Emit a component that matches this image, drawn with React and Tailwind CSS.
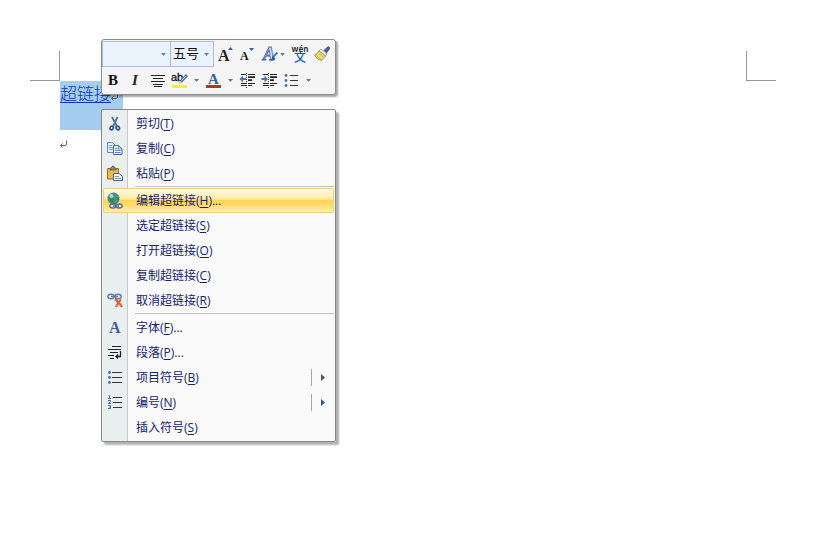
import React from "react";

const SERIF = "Liberation Serif, serif";

function Caret() {
  return (
    <svg width="5" height="3" viewBox="0 0 5 3" aria-hidden="true">
      <path d="M0 0h5L2.5 3z" fill="#5f7fae" />
    </svg>
  );
}

function CornerMark({ side }) {
  const edge = side === "left" ? "border-r" : "border-l";
  return <div className={`h-[30px] w-[30px] border-b border-[#999] ${edge}`} />;
}

function ReturnMark() {
  return (
    <svg width="9" height="9" viewBox="0 0 9 9" fill="none" stroke="#666" aria-hidden="true">
      <path d="M6.5 0.5v3.5q0 1.5-1.5 1.5H0.500M2.500 3.5l-2 2 2 2" />
    </svg>
  );
}

function Icon({ children, size = 18 }) {
  return (
    <svg width={size} height={size} viewBox={`0 0 ${size} ${size}`} fill="none" aria-hidden="true" className="overflow-visible">
      {children}
    </svg>
  );
}

const GrowIcon = () => (
  <Icon>
    <text x="2" y="16" fontFamily={SERIF} fontWeight="bold" fontSize="16" fill="#222">A</text>
    <path d="M12 5l2.500-3L17 5z" fill="#355a9c" />
  </Icon>
);
const ShrinkIcon = () => (
  <Icon>
    <text x="2" y="15" fontFamily={SERIF} fontWeight="bold" fontSize="12" fill="#222">A</text>
    <path d="M11 3h5l-2.500 3z" fill="#355a9c" />
  </Icon>
);
const StyleIcon = () => (
  <Icon>
    <text x="3" y="15" fontFamily={SERIF} fontStyle="italic" fontWeight="bold" fontSize="18" fill="#e9f0fa" stroke="#3c66a8" strokeWidth="0.9">A</text>
    <path d="M17.500 7.500L13 12" stroke="#5278b5" strokeWidth="2" />
    <path d="M12.500 11l3 2.500-5.500 3q2-2 2.500-5.500z" fill="#34578f" />
  </Icon>
);
const PinyinIcon = () => (
  <span className="flex flex-col items-center" aria-hidden="true">
    <span className="h-[7px] font-['Open_Sans',sans-serif] text-[8px] leading-[6px] font-bold text-[#333]">wén</span>
    <span className="h-[10px] text-[12px] leading-[10px] font-medium text-[#2458bd]">文</span>
  </span>
);
const BrushIcon = () => (
  <Icon>
    <path d="M11 5.500l4-4 2 1.500-3.500 5z" fill="#4d6294" stroke="#2f426f" strokeWidth="0.7" />
    <path d="M8 4l6 5-1.500 2L6 6z" fill="#eef1f5" stroke="#77808f" strokeWidth="0.7" />
    <path d="M6 6l6.500 5-4 4.500Q4 15 1.500 10 4.500 9 6 6z" fill="#f5e27c" stroke="#8d7430" strokeWidth="0.7" />
    <path d="M3.500 10.500l5 4M6 8.500l4 3.500" stroke="#b99a40" strokeWidth="0.8" />
  </Icon>
);
const AlignIcon = () => (
  <Icon>
    <path d="M3 4.500h14M5 7.500h10M3 10.500h14M5 13.500h10M6 15.500h8" stroke="#222" />
  </Icon>
);
const HighlightIcon = () => (
  <Icon>
    <text x="1" y="10" fontFamily="Liberation Sans, sans-serif" fontSize="11" fill="#111" stroke="#111" strokeWidth="0.3">ab</text>
    <path d="M2 14h15v3H2z" fill="#f5f02a" />
    <path d="M17 4l-6.500 7" stroke="#4b6fae" strokeWidth="3" />
    <path d="M16 5l-4.500 4.500" stroke="#cfdcf0" />
    <path d="M9.500 9.500l3 2.500L8 13z" fill="#d5dc50" />
  </Icon>
);
const FontColorIcon = () => (
  <Icon>
    <text x="4" y="13" fontFamily={SERIF} fontWeight="bold" fontSize="15" fill="#3e639b">A</text>
    <path d="M2 14h15v3H2z" fill="#954719" />
  </Icon>
);
const IndentLines = () => (
  <>
    <path d="M3 3.500h5M10 3.500h7M10 6.500h7M10 9.500h4M3 12.500h5M10 12.500h7M3 14.500h5M10 14.500h4" stroke="#222" />
    <path d="M10 5.500h7M10 8.500h4" stroke="#555" />
    <path d="M8.500 2v15" stroke="#333" strokeDasharray="1 1" />
  </>
);
const OutdentIcon = () => (
  <Icon>
    <IndentLines />
    <path d="M5 4.500L1.500 8 5 11.500V9h3V7H5z" fill="#4a70bb" />
  </Icon>
);
const IndentIcon = () => (
  <Icon>
    <IndentLines />
    <path d="M4.500 4.500L8 8l-3.500 3.500V9h-3V7h3z" fill="#4a70bb" />
  </Icon>
);
const BulletsIcon = () => (
  <Icon>
    <path d="M8 4.500h8M8 9.500h8M8 14.500h8" stroke="#333" />
    <g fill="#4770aa">
      <circle cx="4" cy="4.500" r="1.400" />
      <circle cx="4" cy="9.500" r="1.400" />
      <circle cx="4" cy="14.500" r="1.400" />
    </g>
  </Icon>
);

const CutIcon = () => (
  <Icon>
    <path d="M6 2l5 9.500M11.500 2L7 11.500" stroke="#54729f" strokeWidth="1.800" />
    <ellipse cx="5.700" cy="13" rx="1.600" ry="2" stroke="#2d5294" strokeWidth="1.600" transform="rotate(25 5.700 13)" />
    <ellipse cx="11.800" cy="13" rx="1.600" ry="2" stroke="#2d5294" strokeWidth="1.600" transform="rotate(-25 11.800 13)" />
  </Icon>
);
const CopyIcon = () => (
  <Icon>
    <path d="M1.500 2.500h5l3 3v7h-8z" fill="#e6f0fc" stroke="#6286bf" />
    <path d="M3 5.500h3M3 7.500h4M3 9.500h4" stroke="#82a4d5" />
    <path d="M7.500 5.500h5l3.500 3.500v5.500H7.500z" fill="#f5f9ff" stroke="#4269aa" />
    <path d="M12.500 5.500V9H16M9 8.500h2.500M9 10.500h5.500M9 12.500h5.500" stroke="#5e86c4" />
  </Icon>
);
const PasteIcon = () => (
  <Icon>
    <path d="M1.500 3.500h11v10.500h-11z" fill="#efb94a" stroke="#9b6d20" />
    <path d="M4 5V3h1.500q0-2 1.500-2t1.500 2H10v2z" fill="#8e8a80" stroke="#5b5040" strokeWidth="0.8" />
    <path d="M7.500 8.500h5.500l3.500 3v4h-9z" fill="#f2f5fa" stroke="#4f627e" />
    <path d="M9 11.500h4M9 13.500h6" stroke="#7d94b5" />
  </Icon>
);
const GlobeLinkIcon = () => (
  <Icon>
    <circle cx="7.500" cy="6.500" r="5.500" fill="#459a8e" stroke="#3c7780" />
    <path d="M3 5q3-4 6-2L7 6l2 2-2 4q-3-2-4-7zM10 5l2.500 1v3l-2-1z" fill="#37865d" />
    <circle cx="5.500" cy="4" r="2" fill="#a5dce0" />
    <g stroke="#5a6d85" strokeWidth="1.400" fill="#d7e0eb">
      <ellipse cx="7" cy="14" rx="3.200" ry="2" />
      <ellipse cx="13" cy="14" rx="3.200" ry="2" />
      <path d="M7 14h6" />
    </g>
  </Icon>
);
const UnlinkIcon = () => (
  <Icon>
    <g stroke="#6280a6" strokeWidth="1.400" fill="#dce4ee">
      <ellipse cx="5" cy="4.500" rx="3.200" ry="2.200" />
      <ellipse cx="12" cy="4.500" rx="3.200" ry="2.200" />
      <path d="M5 4.500h7" />
    </g>
    <path d="M9 7q4 3 7 8M15 7.500q-3.500 3-5 7.500" stroke="#e0622f" strokeWidth="2.200" />
  </Icon>
);
const FontIcon = () => (
  <Icon>
    <text x="3" y="14" fontFamily={SERIF} fontWeight="bold" fontSize="16" fill="#3e5f96">A</text>
  </Icon>
);
const ParagraphIcon = () => (
  <Icon>
    <path d="M6 2.500h9M2 5.500h13M4 8.500h8M2 11.500h6M4 14.500h4" stroke="#222" />
    <path d="M14.500 7v5.500H10M12 10.500l-2 2 2 2" stroke="#222" strokeWidth="1.300" />
  </Icon>
);
const MenuBulletsIcon = () => (
  <Icon>
    <path d="M6 3.500h10M6 8.500h10M6 13.500h10" stroke="#333" />
    <g fill="#4770aa">
      <circle cx="3.500" cy="3.500" r="1.400" />
      <circle cx="3.500" cy="8.500" r="1.400" />
      <circle cx="3.500" cy="13.500" r="1.400" />
    </g>
  </Icon>
);
const NumberingIcon = () => (
  <Icon>
    <path d="M7 3.500h9M7 8.500h9M7 13.500h9" stroke="#333" />
    <g stroke="#4770aa">
      <path d="M2.500 1.500H3.500V4M2 4.500h3" />
      <path d="M2 6.500h2.500v1L2.500 9.500h2.500" />
      <path d="M2 11.500h2.500v3H2M3 13h1.500" />
    </g>
  </Icon>
);

function ToolButton({ label, size = "w-[22px] justify-center", children }) {
  return (
    <button type="button" aria-label={label} className={`flex h-[26px] shrink-0 items-center ${size}`}>
      {children}
    </button>
  );
}

const NARROW = "w-3 justify-center";

function ToolSelect({ label, options, className }) {
  return (
    <div className={`relative h-[26px] shrink-0 border border-[#a9bddb] bg-[#eaf2fb] ${className}`}>
      <select aria-label={label} className="block h-full w-full appearance-none bg-transparent pl-[2px] text-[13px] text-[#111] outline-none">
        {options.map((o) => (
          <option key={o}>{o}</option>
        ))}
      </select>
      <span className="pointer-events-none absolute inset-y-0 right-1 flex items-center">
        <Caret />
      </span>
    </div>
  );
}

function MiniToolbar() {
  return (
    <div role="toolbar" aria-label="格式" className="rounded-[3px] border border-[#8a8c90] bg-[#f5f5f6] py-px shadow-[2px_2px_2px_rgba(0,0,0,0.35)]">
      <div className="flex items-center">
        <ToolSelect label="字体" options={[""]} className="w-[69px]" />
        <ToolSelect label="字号" options={["五号"]} className="w-[43px] border-l-0" />
        <ToolButton label="增大字号"><GrowIcon /></ToolButton>
        <ToolButton label="缩小字号"><ShrinkIcon /></ToolButton>
        <ToolButton label="样式"><StyleIcon /></ToolButton>
        <ToolButton label="更多样式" size="w-2 justify-start"><Caret /></ToolButton>
        <ToolButton label="拼音指南" size="w-6 justify-center"><PinyinIcon /></ToolButton>
        <ToolButton label="格式刷" size="w-5 justify-center"><BrushIcon /></ToolButton>
      </div>
      <div className="flex items-center">
        <ToolButton label="加粗"><span className="font-['Liberation_Serif',serif] text-[15px] font-black text-[#111]">B</span></ToolButton>
        <ToolButton label="倾斜"><span className="font-['Liberation_Serif',serif] text-[15px] font-bold text-[#222] italic">I</span></ToolButton>
        <ToolButton label="居中"><AlignIcon /></ToolButton>
        <ToolButton label="突出显示"><HighlightIcon /></ToolButton>
        <ToolButton label="突出显示颜色" size={NARROW}><Caret /></ToolButton>
        <ToolButton label="字体颜色"><FontColorIcon /></ToolButton>
        <ToolButton label="更多字体颜色" size={NARROW}><Caret /></ToolButton>
        <ToolButton label="减少缩进量"><OutdentIcon /></ToolButton>
        <ToolButton label="增加缩进量"><IndentIcon /></ToolButton>
        <ToolButton label="项目符号"><BulletsIcon /></ToolButton>
        <ToolButton label="更多项目符号" size={NARROW}><Caret /></ToolButton>
      </div>
    </div>
  );
}

const groups = [
  [
    { text: "剪切", accel: "T", icon: CutIcon },
    { text: "复制", accel: "C", icon: CopyIcon },
    { text: "粘贴", accel: "P", icon: PasteIcon },
  ],
  [
    { text: "编辑超链接", accel: "H", icon: GlobeLinkIcon, dots: true, active: true },
    { text: "选定超链接", accel: "S" },
    { text: "打开超链接", accel: "O" },
    { text: "复制超链接", accel: "C" },
    { text: "取消超链接", accel: "R", icon: UnlinkIcon },
  ],
  [
    { text: "字体", accel: "F", icon: FontIcon, dots: true },
    { text: "段落", accel: "P", icon: ParagraphIcon, dots: true },
    { text: "项目符号", accel: "B", icon: MenuBulletsIcon, submenu: true },
    { text: "编号", accel: "N", icon: NumberingIcon, submenu: true },
    { text: "插入符号", accel: "S" },
  ],
];

function MenuItem({ item }) {
  const Glyph = item.icon;
  const tone = item.active
    ? "rounded-[2px] border border-[#ecd27e] bg-[linear-gradient(#fffbe6,#ffeaa8_42%,#ffd557_50%,#ffd965_65%,#fff0ab)]"
    : "border border-transparent";
  return (
    <button type="button" role="menuitem" className={`mx-px flex h-[25px] items-center text-left ${tone}`}>
      <span className="flex w-[21px] shrink-0 justify-center">{Glyph && <Glyph />}</span>
      <span className="ml-[11px] grow whitespace-nowrap">
        {item.text}(<u className="underline underline-offset-2">{item.accel}</u>){item.dots && "..."}
      </span>
      {item.submenu && (
        <span className="flex items-center gap-[9px] pr-2">
          <span className="h-[17px] w-px bg-[#a3a8ae]" />
          <svg width="4" height="7" viewBox="0 0 4 7" aria-hidden="true">
            <path d="M0 0l4 3.500L0 7z" fill="#3c5577" />
          </svg>
        </span>
      )}
    </button>
  );
}

function ContextMenu() {
  return (
    <div role="menu" className="rounded-[2px] border border-[#858789] bg-[linear-gradient(90deg,#e9eeee_25px,#c6cacd_25px,#c6cacd_26px,#fafafa_26px)] py-px font-['Open_Sans','Noto_Sans_CJK_SC',sans-serif] text-[12px] text-[#15246b] shadow-[3px_3px_2px_rgba(0,0,0,0.3)]">
      <div className="flex flex-col">
        {groups.map((items, i) => (
          <React.Fragment key={i}>
            {i > 0 && (
              <div role="separator" className="h-[2px] pr-px pl-[33px]">
                <div className="h-px bg-[#bfc1c5]" />
              </div>
            )}
            {items.map((item) => (
              <MenuItem key={item.text} item={item} />
            ))}
          </React.Fragment>
        ))}
      </div>
    </div>
  );
}

export default function App() {
  return (
    <main className="relative min-h-screen bg-white font-['Liberation_Sans','Noto_Sans_CJK_SC',sans-serif]">
      <div className="flex justify-between pt-[51px] pr-12 pl-[30px]">
        <CornerMark side="left" />
        <CornerMark side="right" />
      </div>
      <div className="pl-[60px]">
        <p className="flex h-[49px] w-[63px] items-start bg-[#a5cdf0]">
          <a href="#link" className="text-[17px] leading-7 font-light whitespace-nowrap text-[#0c36bd] underline decoration-1 underline-offset-2">超链接</a>
          <span className="mt-3"><ReturnMark /></span>
        </p>
        <p className="flex h-[49px] pt-[10px]"><ReturnMark /></p>
      </div>
      <div className="absolute top-[39px] left-[101px] flex w-[235px] flex-col gap-[14px]">
        <MiniToolbar />
        <ContextMenu />
      </div>
    </main>
  );
}
